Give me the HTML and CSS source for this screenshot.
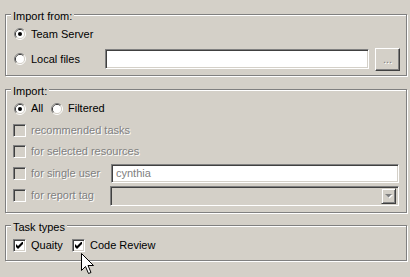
FILE: index.html
```html
<!DOCTYPE html>
<html>
<head>
<meta charset="utf-8">
<link rel="stylesheet" href="styles.css">
</head>
<body>
<div class="group g1">
  <div class="legend">Import from:</div>
  <div class="row r1">
    <span class="radio"><svg width="12" height="12" viewBox="0 0 12 12"><path d="M2.11 9.89 A5.5 5.5 0 0 1 9.89 2.11" stroke="#808080" fill="none"/><path d="M9.89 2.11 A5.5 5.5 0 0 1 2.11 9.89" stroke="#fff" fill="none"/><path d="M2.82 9.18 A4.5 4.5 0 0 1 9.18 2.82" stroke="#404040" fill="none"/><path d="M9.18 2.82 A4.5 4.5 0 0 1 2.82 9.18" stroke="#d4d0c8" fill="none"/><circle cx="6" cy="6" r="4" fill="#fff"/><circle cx="6" cy="6" r="2" fill="#000"/></svg></span>
    <span class="text">Team Server</span>
  </div>
  <div class="row r2">
    <span class="radio"><svg width="12" height="12" viewBox="0 0 12 12"><path d="M2.11 9.89 A5.5 5.5 0 0 1 9.89 2.11" stroke="#808080" fill="none"/><path d="M9.89 2.11 A5.5 5.5 0 0 1 2.11 9.89" stroke="#fff" fill="none"/><path d="M2.82 9.18 A4.5 4.5 0 0 1 9.18 2.82" stroke="#404040" fill="none"/><path d="M9.18 2.82 A4.5 4.5 0 0 1 2.82 9.18" stroke="#d4d0c8" fill="none"/><circle cx="6" cy="6" r="4" fill="#fff"/></svg></span>
    <span class="text w-local">Local files</span>
    <span class="edit e-local"></span>
    <span class="button b-dots">...</span>
  </div>
</div>

<div class="group g2">
  <div class="legend">Import:</div>
  <div class="row r-radios">
    <span class="radio"><svg width="12" height="12" viewBox="0 0 12 12"><path d="M2.11 9.89 A5.5 5.5 0 0 1 9.89 2.11" stroke="#808080" fill="none"/><path d="M9.89 2.11 A5.5 5.5 0 0 1 2.11 9.89" stroke="#fff" fill="none"/><path d="M2.82 9.18 A4.5 4.5 0 0 1 9.18 2.82" stroke="#404040" fill="none"/><path d="M9.18 2.82 A4.5 4.5 0 0 1 2.82 9.18" stroke="#d4d0c8" fill="none"/><circle cx="6" cy="6" r="4" fill="#fff"/><circle cx="6" cy="6" r="2" fill="#000"/></svg></span>
    <span class="text w-all">All</span>
    <span class="radio"><svg width="12" height="12" viewBox="0 0 12 12"><path d="M2.11 9.89 A5.5 5.5 0 0 1 9.89 2.11" stroke="#808080" fill="none"/><path d="M9.89 2.11 A5.5 5.5 0 0 1 2.11 9.89" stroke="#fff" fill="none"/><path d="M2.82 9.18 A4.5 4.5 0 0 1 9.18 2.82" stroke="#404040" fill="none"/><path d="M9.18 2.82 A4.5 4.5 0 0 1 2.82 9.18" stroke="#d4d0c8" fill="none"/><circle cx="6" cy="6" r="4" fill="#fff"/></svg></span>
    <span class="text">Filtered</span>
  </div>
  <div class="row r-c1">
    <span class="check disabled"></span>
    <span class="text dis">recommended tasks</span>
  </div>
  <div class="row r-c2">
    <span class="check disabled"></span>
    <span class="text dis">for selected resources</span>
  </div>
  <div class="row r-c3">
    <span class="check disabled"></span>
    <span class="text dis w-user">for single user</span>
    <span class="edit e-user"><span class="edit-text">cynthia</span></span>
  </div>
  <div class="row r-c4">
    <span class="check disabled"></span>
    <span class="text dis w-tag">for report tag</span>
    <span class="edit combo">
      <span class="drop"><svg width="7" height="4" viewBox="0 0 7 4"><path d="M0 0 H7 L3.5 3.5 Z" fill="#808080"/></svg></span>
    </span>
  </div>
</div>

<div class="group g3">
  <div class="legend">Task types</div>
  <div class="row r-task">
    <span class="check"><svg width="7" height="7" viewBox="0 0 7 7"><path d="M0 2 L2 4 L7 -1 L7 2 L2 7 L0 5 Z" fill="#000"/></svg></span>
    <span class="text w-qual">Quaity</span>
    <span class="check"><svg width="7" height="7" viewBox="0 0 7 7"><path d="M0 2 L2 4 L7 -1 L7 2 L2 7 L0 5 Z" fill="#000"/></svg></span>
    <span class="text">Code Review</span>
  </div>
</div>

<svg class="cursor" width="13" height="22" viewBox="0 0 13 22"><path d="M0.5 0.5 L0.5 17.5 L4.5 13.5 L7.5 20.5 L10 19.5 L7 12.5 L12.5 12.5 Z" fill="#fff" stroke="#000" stroke-linejoin="miter"/></svg>
</body>
</html>
```

FILE: styles.css
```css
html, body {
  margin: 0;
  padding: 0;
}
body {
  background: #d4d0c8;
  font-family: "Liberation Sans", Arial, sans-serif;
  font-size: 11px;
  color: #000;
  width: 410px;
  height: 277px;
  overflow: hidden;
  position: relative;
}
.group {
  box-sizing: border-box;
  width: 402px;
  margin-left: 5px;
  border: 1px solid #808080;
  box-shadow: inset 1px 1px #fff, 1px 1px #fff;
  padding: 0 6px 4px 8px;
}
.g1 { margin-top: 14px; }
.g2 { margin-top: 13px; padding-bottom: 5px; }
.g3 { margin-top: 12px; padding-bottom: 3px; }
.legend {
  margin-top: -5px;
  margin-left: -3px;
  padding: 0 2px;
  line-height: 13px;
  height: 13px;
  background: #d4d0c8;
  width: fit-content;
}
.row {
  display: flex;
  align-items: center;
  height: 22px;
}
.r2 { height: 24px; margin-top: 2px; }
.r-radios { height: 21px; }
.r-c2 { height: 21px; }
.r-c4 { height: 23px; }
.r-task { height: 23px; }
.radio {
  display: block;
  width: 12px;
  height: 12px;
  margin-right: 5px;
}
.radio svg { display: block; }
.text { white-space: nowrap; line-height: 13px; }
.w-local { width: 74px; }
.w-all { width: 20px; }
.w-user { width: 80px; }
.w-tag { width: 79px; }
.w-qual { width: 41px; }
.dis {
  color: #808080;
  text-shadow: 1px 1px #fff;
}
.check {
  box-sizing: border-box;
  width: 13px;
  height: 13px;
  margin-left: -1px;
  margin-right: 5px;
  background: #fff;
  border-top: 1px solid #808080;
  border-left: 1px solid #808080;
  border-bottom: 1px solid #fff;
  border-right: 1px solid #fff;
  box-shadow: inset 1px 1px #404040, inset -1px -1px #d4d0c8;
  display: flex;
  align-items: center;
  justify-content: center;
}
.check svg { display: block; }
.r-task .check + .text + .check { margin-left: 0; }
.check.disabled { background: #d4d0c8; }
.edit {
  box-sizing: border-box;
  display: flex;
  align-items: center;
  background: #fff;
  border-top: 1px solid #808080;
  border-left: 1px solid #808080;
  border-bottom: 1px solid #fff;
  border-right: 1px solid #fff;
  box-shadow: inset 1px 1px #404040, inset -1px -1px #d4d0c8;
}
.e-local { width: 265px; height: 20px; }
.e-user { width: 288px; height: 19px; }
.edit-text {
  color: #808080;
  padding-left: 4px;
  line-height: 13px;
}
.combo {
  width: 289px;
  height: 20px;
  background: #d4d0c8;
  justify-content: flex-end;
  padding-right: 2px;
}
.drop {
  box-sizing: border-box;
  width: 15px;
  height: 16px;
  border-top: 1px solid #d4d0c8;
  border-left: 1px solid #d4d0c8;
  border-right: 1px solid #404040;
  border-bottom: 1px solid #404040;
  box-shadow: inset 1px 1px #fff, inset -1px -1px #808080;
  display: flex;
  align-items: center;
  justify-content: center;
}
.drop svg { display: block; filter: drop-shadow(1px 1px 0 #fff); }
.button {
  box-sizing: border-box;
  width: 25px;
  height: 23px;
  margin-left: 6px;
  border-top: 1px solid #fff;
  border-left: 1px solid #fff;
  border-right: 1px solid #404040;
  border-bottom: 1px solid #404040;
  box-shadow: inset -1px -1px #808080;
  display: flex;
  align-items: center;
  justify-content: center;
  color: #808080;
  text-shadow: 1px 1px #fff;
  line-height: 13px;
}
.cursor {
  position: absolute;
  left: 81px;
  top: 253px;
}
```
